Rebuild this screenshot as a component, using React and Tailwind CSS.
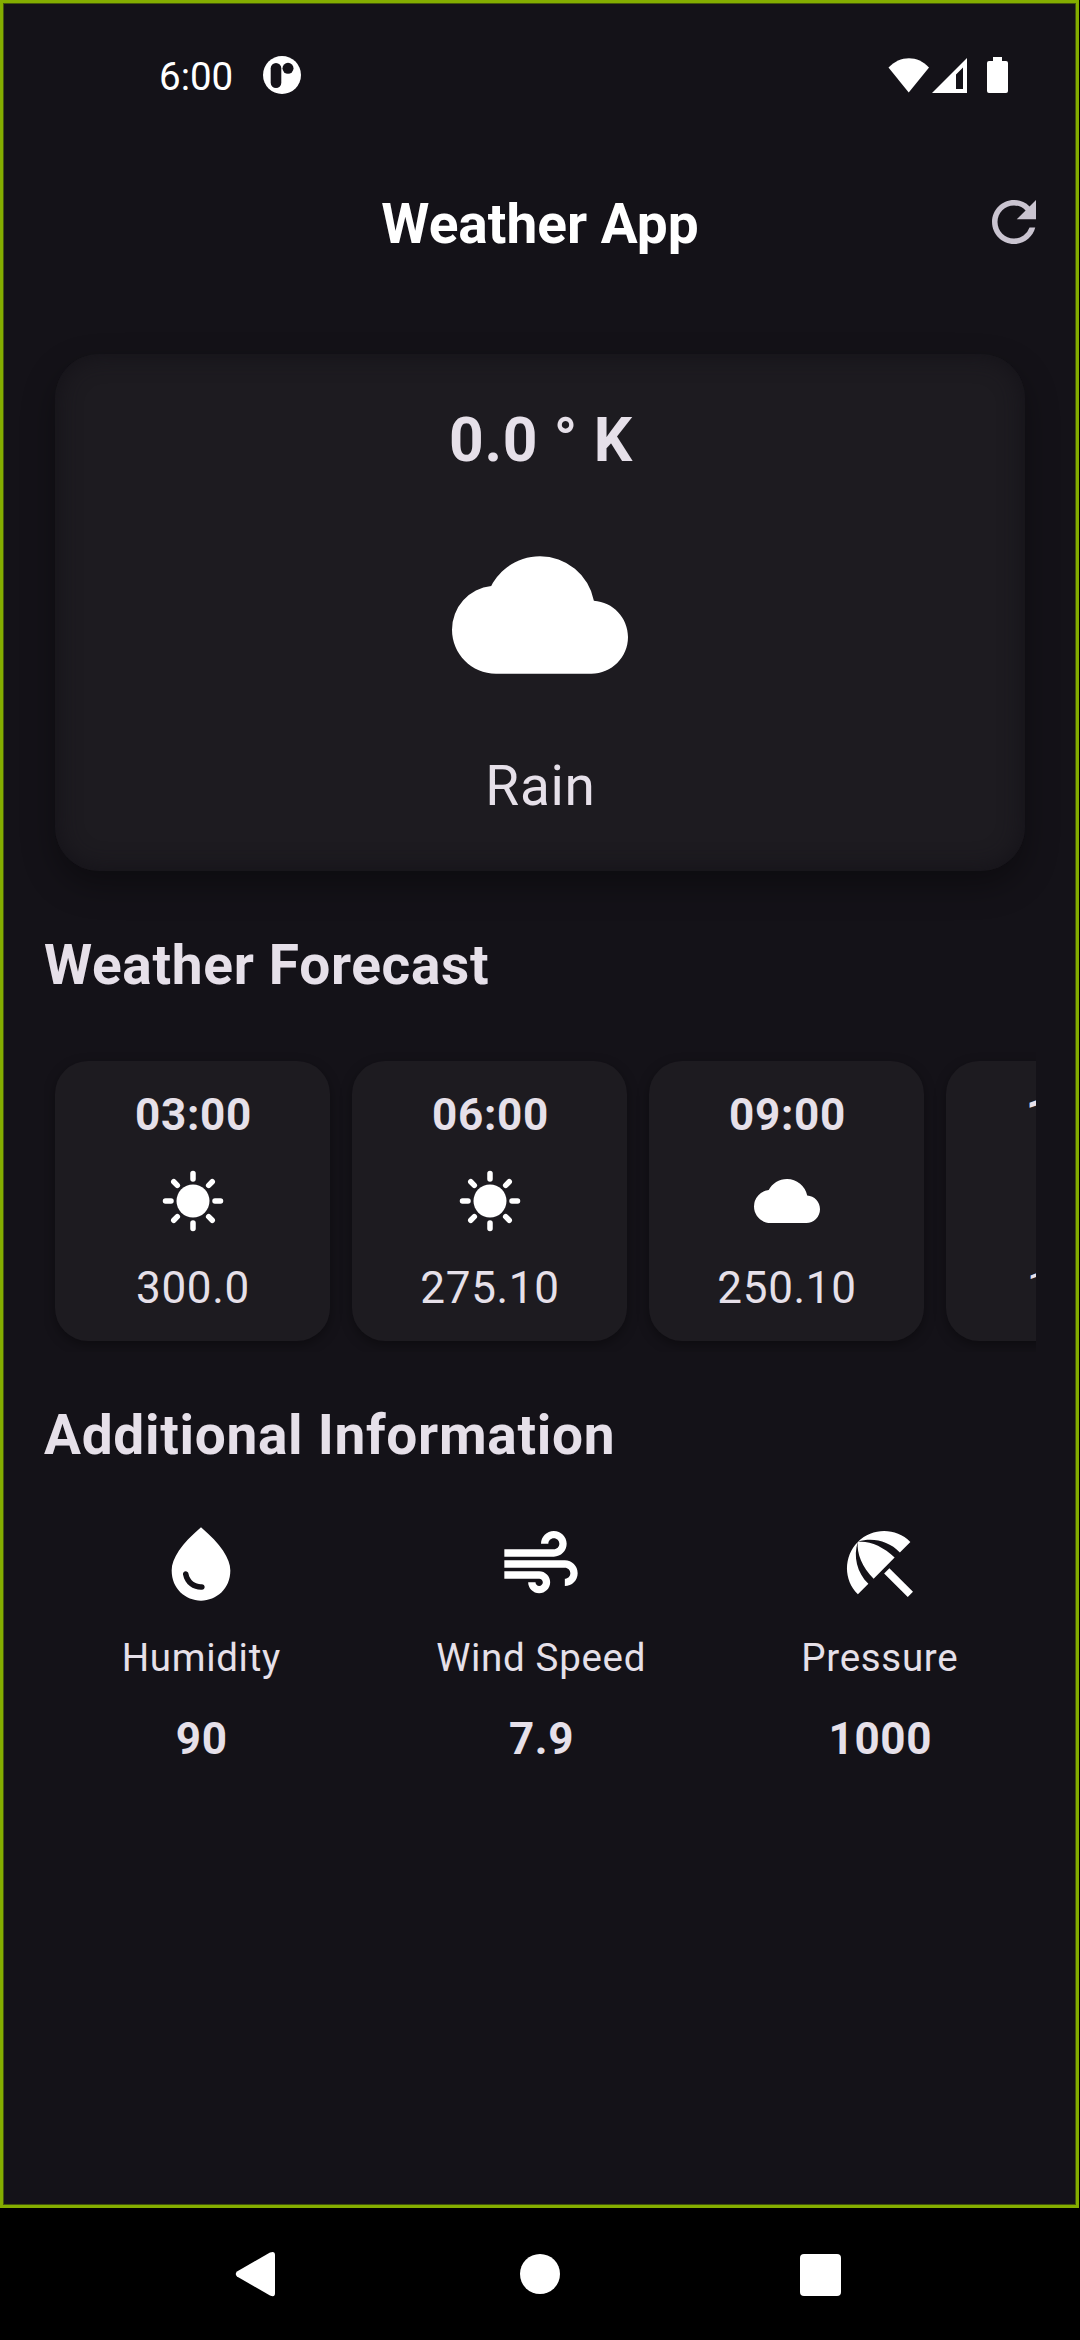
import { MdCloud, MdRefresh, MdWaterDrop, MdAir, MdBeachAccess } from "react-icons/md";

function Sun() {
  return (
    <svg viewBox="0 0 24 24" className="size-[66px]" fill="none" stroke="white" strokeWidth="2" strokeLinecap="round">
      <circle cx="12" cy="12" r="6" fill="white" stroke="none" />
      <path d="M2 12h2M20 12h2M12 2v2M12 20v2M5 5l1.3 1.3M17.7 17.7L19 19M19 5l-1.3 1.3M6.3 17.7L5 19" />
    </svg>
  );
}

const forecast = [
  { time: "03:00", temp: "300.0", sunny: true },
  { time: "06:00", temp: "275.10", sunny: true },
  { time: "09:00", temp: "250.10", sunny: false },
  { time: "12:00", temp: "100.0", sunny: false },
];

const info = [
  { label: "Humidity", value: "90", Icon: MdWaterDrop },
  { label: "Wind Speed", value: "7.9", Icon: MdAir },
  { label: "Pressure", value: "1000", Icon: MdBeachAccess },
];

function StatusBar() {
  return (
    <div className="flex h-36 items-center pl-[156px] pr-[66px]">
      <span className="pt-[5px] text-[38.5px] leading-none text-white">6:00</span>
      <svg viewBox="0 0 38 38" className="ml-[30px] size-[38px]">
        <circle cx="19" cy="19" r="19" fill="white" />
        <rect x="7.7" y="7" width="10.6" height="25" rx="5.3" fill="#141218" />
        <circle cx="25" cy="12.3" r="5.5" fill="#141218" />
      </svg>
      <svg viewBox="0 0 122 36" className="ml-auto h-9 w-[122px]" fill="white">
        <path d="M0.5 10.5C12-2 30-2 41 10.5L20.7 35.5z" />
        <path fillRule="evenodd" d="M44 36L79 1v35zM68 17.5V32h7V10.5z" />
        <path d="M105 0h9v4h4a2 2 0 0 1 2 2v28a2 2 0 0 1-2 2h-17a2 2 0 0 1-2-2V6a2 2 0 0 1 2-2h4z" />
      </svg>
    </div>
  );
}

export default function App() {
  return (
    <div className="flex h-[2340px] w-[1080px] flex-col bg-black font-['Roboto',sans-serif] text-[#e6e0e9]">
      <div className="h-[2208px] w-[1079px] overflow-hidden border-[3px] border-[#84ad00] bg-[#141218] shadow-[inset_0_0_0_1px_#43560c]">
        <StatusBar />
        <header className="grid h-[150px] grid-cols-[1fr_auto_1fr] items-center px-[29px]">
          <span />
          <h1 className="pl-px pt-1 text-[55px] font-bold leading-none text-white">Weather App</h1>
          <MdRefresh className="size-[66px] justify-self-end text-[#cac4d0]" />
        </header>
        <main className="pl-[41px] pr-10 tracking-[0.6875px]">
          <section className="mx-[11px] mt-[57px] flex h-[517px] flex-col items-center rounded-[44px] bg-[#1d1b20] shadow-[inset_0_0_25px_#141218,0_14px_32px_rgba(0,0,0,0.35)]">
            <p className="mt-11 pl-0.5 text-[60.5px] font-bold leading-[85px]">0.0 ° K</p>
            <MdCloud className="mt-11 size-44 text-white" />
            <p className="mt-11 pl-px text-[55px] leading-[79px]">Rain</p>
          </section>
          <h2 className="mt-[55px] h-20 text-[55px] font-bold leading-[79px]">Weather Forecast</h2>
          <section className="mt-11 flex gap-[22px] overflow-hidden p-[11px]">
            {forecast.map((f) => (
              <article key={f.time} className="flex h-[280px] w-[275px] shrink-0 flex-col items-center rounded-[33px] bg-[#1d1b20] pt-[23px] shadow-[0_4px_12px_rgba(0,0,0,0.35)]">
                <p className="pl-0.5 text-[44px] font-bold leading-[63px]">{f.time}</p>
                <div className="mt-[21px]">{f.sunny ? <Sun /> : <MdCloud className="size-[66px] text-white" />}</div>
                <p className="mt-[23px] pl-px text-[44px] leading-[63px]">{f.temp}</p>
              </article>
            ))}
          </section>
          <h2 className="mt-11 h-20 text-[55px] font-bold leading-[79px]">Additional Information</h2>
          <section className="mt-11 flex justify-around">
            {info.map(({ label, value, Icon }) => (
              <div key={label} className="flex flex-col items-center">
                <Icon className="size-[88px] text-white" />
                <p className="mt-[22px] text-[38.5px] leading-[55px]">{label}</p>
                <p className="mt-[23px] pl-px text-[44px] font-bold leading-[63px]">{value}</p>
              </div>
            ))}
          </section>
        </main>
      </div>
      <nav className="flex h-[132px] items-center pl-[235px]">
        <svg viewBox="0 0 606 46" className="h-[46px] w-[606px]" fill="white">
          <path d="M2 20.5L35 1.500Q40 -.5 40 4V42Q40 47 35 44.500L2 25.500Q-.5 23 2 20.500z" />
          <circle cx="305" cy="23" r="20" />
          <rect x="565" y="3" width="41" height="42" rx="4" />
        </svg>
      </nav>
    </div>
  );
}
